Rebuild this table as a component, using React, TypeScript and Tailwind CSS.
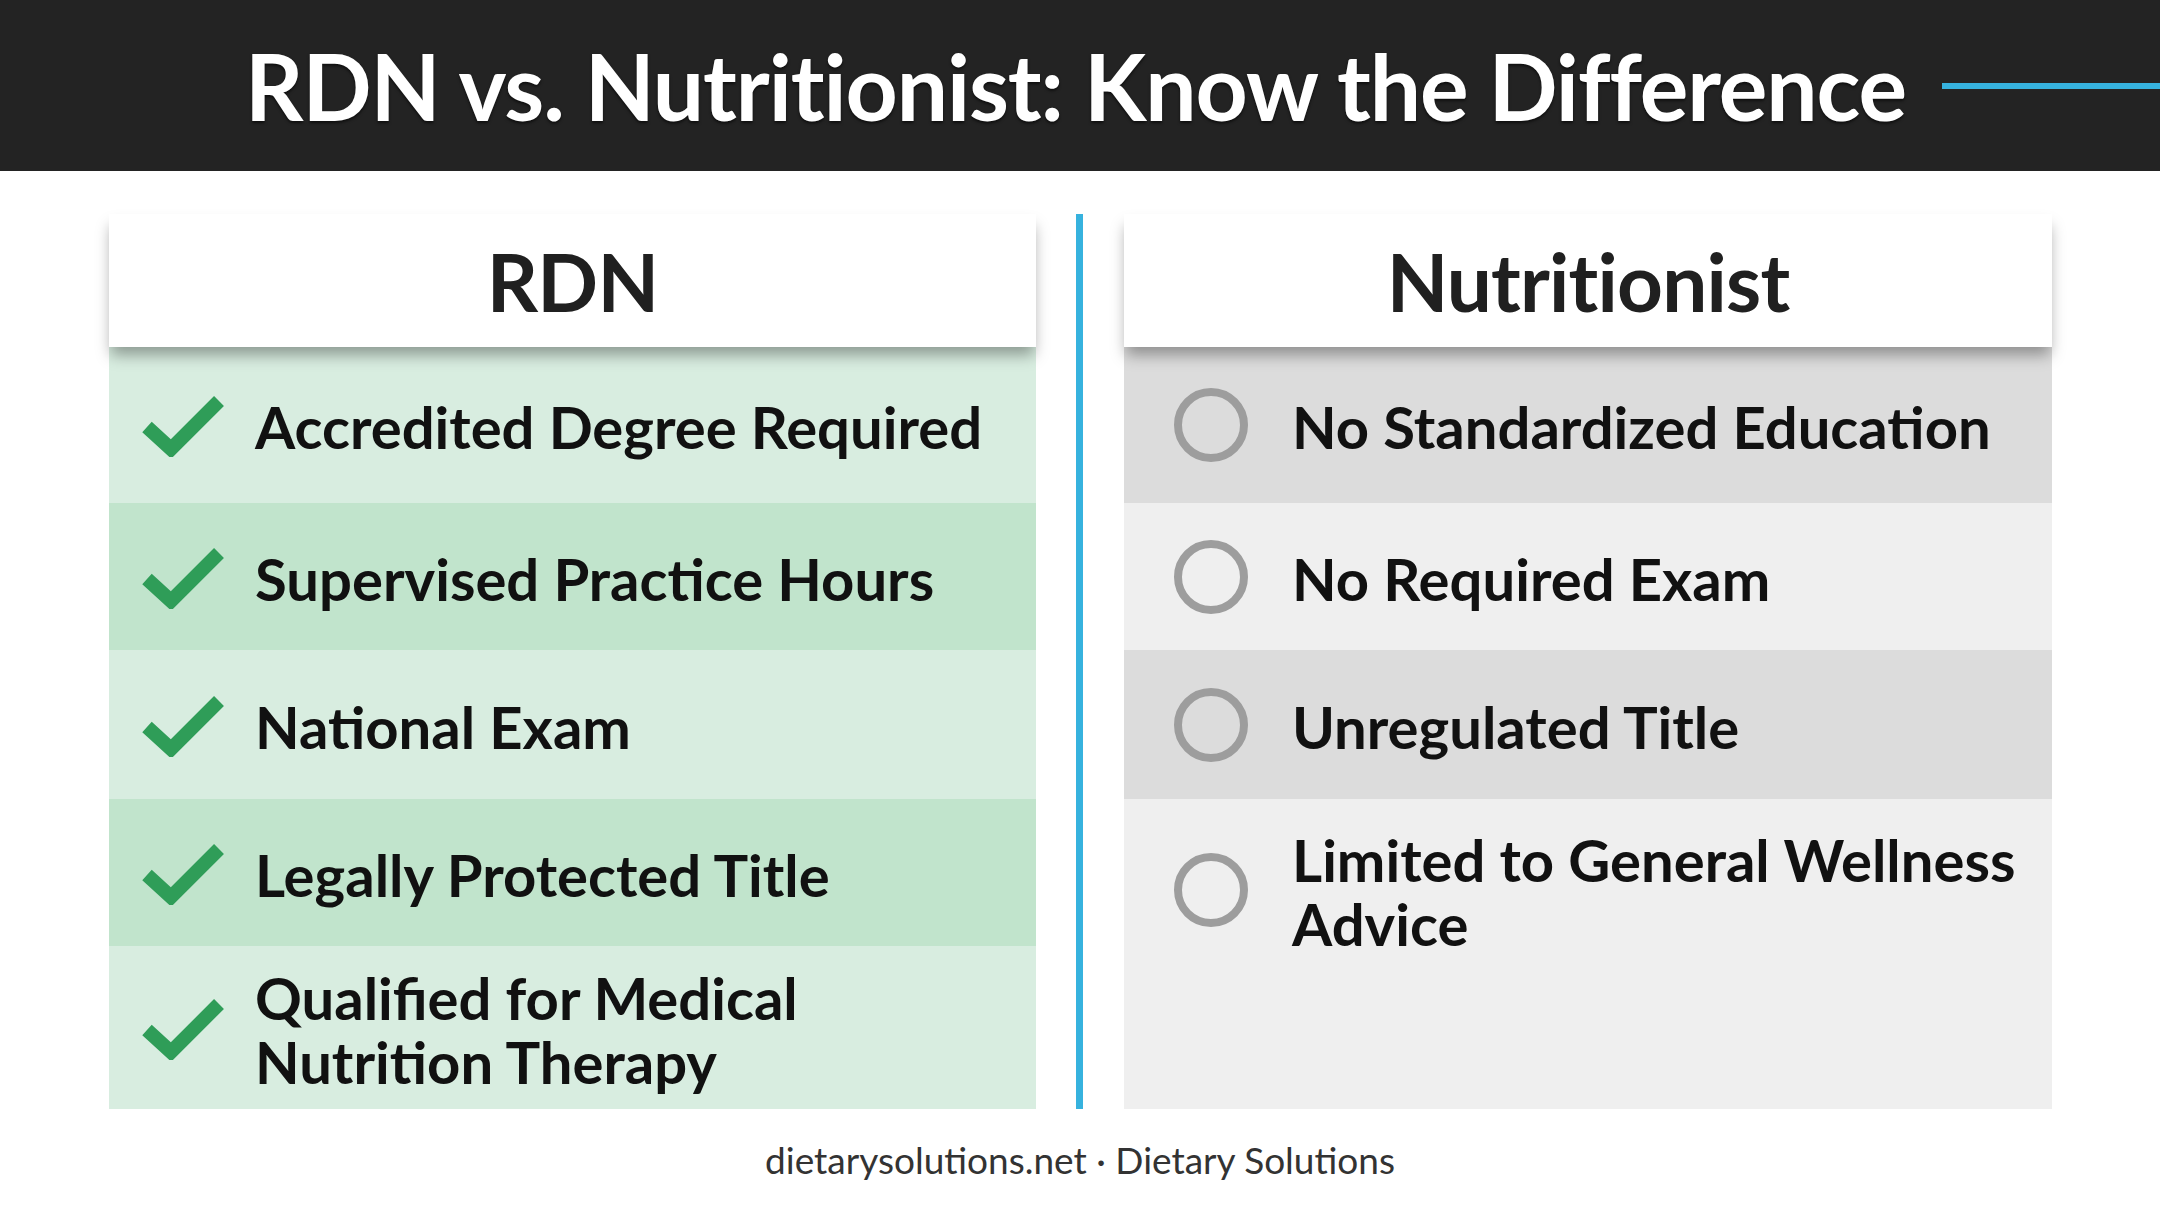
import { Fragment } from 'react';

const font = { fontFamily: 'Lato, "Open Sans", sans-serif' };

const rdnItems = [
  { lines: ['Accredited Degree Required'], h: 'h-[156px]', bg: 'bg-[#d8ede0]' },
  { lines: ['Supervised Practice Hours'], h: 'h-[147px]', bg: 'bg-[#c1e4cc]' },
  { lines: ['National Exam'], h: 'h-[149px]', bg: 'bg-[#d8ede0]' },
  { lines: ['Legally Protected Title'], h: 'h-[147px]', bg: 'bg-[#c1e4cc]' },
  { lines: ['Qualified for Medical', 'Nutrition Therapy'], h: 'flex-1', bg: 'bg-[#d8ede0]' },
];

const Check = () => (
  <svg width="84" height="64" viewBox="0 0 84 64" className="shrink-0">
    <polyline points="6,34 30,56 78,8" fill="none" stroke="#2f9d58" strokeWidth="14" strokeLinejoin="miter" />
  </svg>
);

const Ring = () => (
  <div className="w-[74px] h-[74px] shrink-0 rounded-full border-[8px] border-[#9d9d9d]" />
);

const CardHeader = ({ label }: { label: string }) => (
  <div className="relative z-10 h-[133px] bg-white flex items-center justify-center shadow-[0_10px_14px_-2px_rgba(0,0,0,0.35)]">
    <h2 className="text-[80px] font-bold text-[#202020] tracking-[-0.01em] leading-none">{label}</h2>
  </div>
);

const Label = ({ lines }: { lines: string[] }) => (
  <span className="text-[58px] font-bold text-[#111] leading-[64px] whitespace-nowrap mt-[4px]">
    {lines.map((l, i) => (
      <Fragment key={l}>
        {i > 0 && <br />}
        {l}
      </Fragment>
    ))}
  </span>
);

export default function App() {
  return (
    <div className="w-[2160px] h-[1206px] bg-white flex flex-col overflow-hidden" style={font}>
      {/* Title bar */}
      <div className="h-[171px] shrink-0 bg-[#232323] flex items-center pl-[245px]">
        <h1 className="text-[91px] font-bold text-white leading-none tracking-[-0.012em] whitespace-nowrap [text-shadow:0_2px_3px_rgba(0,0,0,0.6)]">
          RDN vs. Nutritionist: Know the Difference
        </h1>
        <div className="flex-1 ml-[36px] h-[6px] bg-[#36b2de]" />
      </div>

      {/* Columns */}
      <div className="flex pl-[109px] pt-[43px]">
        <div className="w-[927px] h-[895px] flex flex-col">
          <CardHeader label="RDN" />
          {rdnItems.map((item) => (
            <div key={item.lines[0]} className={`${item.h} ${item.bg} flex items-center pl-[32px] gap-[30px]`}>
              <Check />
              <Label lines={item.lines} />
            </div>
          ))}
        </div>

        <div className="w-[7px] h-[895px] ml-[40px] bg-[#36b2de]" />

        <div className="w-[928px] h-[895px] ml-[41px] flex flex-col">
          <CardHeader label="Nutritionist" />
          <div className="h-[156px] bg-[#dcdcdc] flex items-center pl-[50px] gap-[44px]">
            <Ring />
            <Label lines={['No Standardized Education']} />
          </div>
          <div className="h-[147px] bg-[#efefef] flex items-center pl-[50px] gap-[44px]">
            <Ring />
            <Label lines={['No Required Exam']} />
          </div>
          <div className="h-[149px] bg-[#dcdcdc] flex items-center pl-[50px] gap-[44px]">
            <Ring />
            <Label lines={['Unregulated Title']} />
          </div>
          <div className="flex-1 bg-[#efefef]">
            <div className="h-[182px] flex items-center pl-[50px] gap-[44px]">
              <Ring />
              <Label lines={['Limited to General Wellness', 'Advice']} />
            </div>
          </div>
        </div>
      </div>

      {/* Footer */}
      <div className="flex-1 flex items-center justify-center pt-[4px]">
        <p className="text-[37px] text-[#333]">dietarysolutions.net · Dietary Solutions</p>
      </div>
    </div>
  );
}
